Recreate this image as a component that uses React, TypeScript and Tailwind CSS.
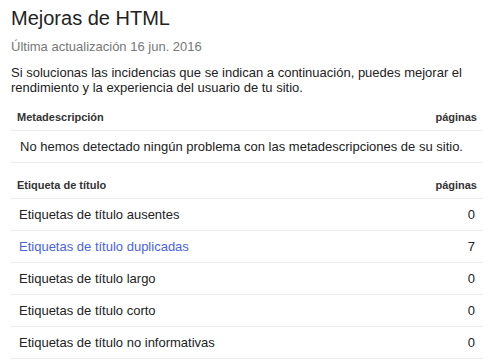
const titleRows = [
  { label: "Etiquetas de título ausentes", count: 0 },
  { label: "Etiquetas de título duplicadas", count: 7, link: true },
  { label: "Etiquetas de título largo", count: 0 },
  { label: "Etiquetas de título corto", count: 0 },
  { label: "Etiquetas de título no informativas", count: 0 },
];

function SectionHeader({ title }: { title: string }) {
  return (
    <div className="flex justify-between items-end h-[24px] pb-[5px] px-[6px] border-b border-[#ebebeb] text-[11px] font-bold text-[#333]">
      <span>{title}</span>
      <span>páginas</span>
    </div>
  );
}

export default function App() {
  return (
    <div className="bg-white w-[494px] h-[364px] pl-[11px] pr-[11px] pt-[6px] font-['Liberation_Sans',Arial,sans-serif] text-[#222]">
      <h1 className="text-[20px] leading-[24px] text-[#222]">Mejoras de HTML</h1>
      <p className="mt-[9px] text-[13px] leading-[16px] text-[#777]">Última actualización 16 jun. 2016</p>
      <p className="mt-[10px] text-[13px] leading-[15px] text-[#222]">
        Si solucionas las incidencias que se indican a continuación, puedes mejorar el rendimiento y la experiencia del usuario de tu sitio.
      </p>

      <div className="mt-[12px]">
        <SectionHeader title="Metadescripción" />
        <div className="h-[32px] flex items-center px-[9px] border-b border-[#ebebeb] text-[13px]">
          No hemos detectado ningún problema con las metadescripciones de su sitio.
        </div>
      </div>

      <div className="mt-[12px]">
        <SectionHeader title="Etiqueta de título" />
        {titleRows.map((row) => (
          <div key={row.label} className="h-[32px] flex items-center justify-between px-[8px] border-b border-[#ebebeb] text-[13px]">
            <span className={row.link ? "text-[#4a63dc]" : "text-[#222]"}>{row.label}</span>
            <span>{row.count}</span>
          </div>
        ))}
      </div>
    </div>
  );
}
